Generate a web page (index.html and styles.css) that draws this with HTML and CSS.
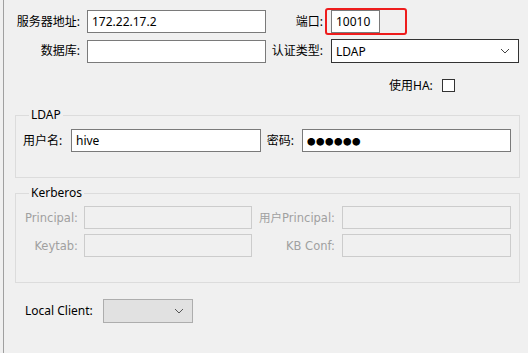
FILE: index.html
```html
<!DOCTYPE html>
<html lang="zh-CN">
<head>
    <meta charset="UTF-8">
    <title>连接设置</title>
    <link rel="stylesheet" href="styles.css">
</head>
<body>
    <div class="frame">

        <div class="row row-server">
            <label class="lbl lbl-main">服务器地址:</label>
            <input class="field field-host" type="text" value="172.22.17.2">
            <label class="lbl lbl-side">端口:</label>
            <span class="mark">
                <input class="field field-port" type="text" value="10010">
            </span>
        </div>

        <div class="row row-db">
            <label class="lbl lbl-main">数据库:</label>
            <input class="field field-host" type="text" value="">
            <label class="lbl lbl-side">认证类型:</label>
            <div class="combo combo-auth">
                <span>LDAP</span>
                <svg width="10" height="6" viewBox="0 0 10 6"><path d="M1 1 L5 5 L9 1" fill="none" stroke="#444" stroke-width="1"/></svg>
            </div>
        </div>

        <div class="row row-ha">
            <label class="lbl">使用HA:</label>
            <span class="check"></span>
        </div>

        <fieldset class="group group-ldap">
            <legend>LDAP</legend>
            <div class="grow">
                <label class="lbl lbl-user">用户名:</label>
                <input class="field field-user" type="text" value="hive">
                <label class="lbl lbl-pass">密码:</label>
                <input class="field field-pass" type="text" value="●●●●●●">
            </div>
        </fieldset>

        <fieldset class="group group-kb">
            <legend>Kerberos</legend>
            <div class="grow">
                <label class="lbl off lbl-k1">Principal:</label>
                <input class="field dis field-k1" type="text" disabled>
                <label class="lbl off lbl-k2">用户Principal:</label>
                <input class="field dis field-k2" type="text" disabled>
            </div>
            <div class="grow">
                <label class="lbl off lbl-k1">Keytab:</label>
                <input class="field dis field-k1" type="text" disabled>
                <label class="lbl off lbl-k2">KB Conf:</label>
                <input class="field dis field-k2" type="text" disabled>
            </div>
        </fieldset>

        <div class="row row-local">
            <label class="lbl lbl-local">Local Client:</label>
            <div class="combo combo-local">
                <svg width="10" height="6" viewBox="0 0 10 6"><path d="M1 1 L5 5 L9 1" fill="none" stroke="#555" stroke-width="1"/></svg>
            </div>
        </div>

    </div>
</body>
</html>
```
FILE: styles.css
```css
body {
    margin: 0;
    background: #f0f0f0;
    font-family: "Noto Sans", "Noto Sans CJK SC", sans-serif;
    font-size: 12px;
    color: #000;
}
.frame {
    margin-left: 3px;
    border-left: 1px solid #a0a0a0;
    height: 353px;
    box-sizing: border-box;
    overflow: hidden;
}
.row {
    display: flex;
    align-items: center;
}
.lbl {
    white-space: nowrap;
    line-height: 16px;
}
.lbl-main {
    width: 76px;
    margin-right: 7px;
    text-align: right;
}
.lbl-side {
    width: 57px;
    margin-right: 2px;
    text-align: right;
}
.field {
    box-sizing: border-box;
    height: 23px;
    margin: 0;
    padding: 0 4px;
    border: 1px solid #7a7a7a;
    background: #fff;
    font-family: "Noto Sans", "Noto Sans CJK SC", sans-serif;
    font-size: 12px;
    color: #000;
    outline: none;
}
.field-host {
    width: 179px;
}
.row-server {
    margin-top: 8px;
    height: 27px;
}
.mark {
    display: flex;
    align-items: center;
    box-sizing: border-box;
    width: 82px;
    height: 27px;
    border: 2px solid #ee1c1c;
    border-radius: 3px;
    padding-left: 4px;
}
.field-port {
    width: 49px;
}
.row-db {
    margin-top: 4px;
    height: 24px;
}
.combo {
    display: flex;
    align-items: center;
    justify-content: space-between;
    box-sizing: border-box;
    height: 24px;
    padding: 0 8px 0 4px;
}
.combo-auth {
    width: 188px;
    margin-left: 6px;
    border: 1px solid #333;
    background: #fff;
}
.row-ha {
    margin-top: 16px;
    height: 13px;
    padding-left: 385px;
}
.row-ha .lbl {
    margin-right: 9px;
}
.check {
    box-sizing: border-box;
    width: 13px;
    height: 13px;
    border: 1px solid #333;
    background: #fff;
}
.group {
    box-sizing: border-box;
    width: 505px;
    margin: 15px 0 0 11px;
    padding: 6px 8px 25px 7px;
    border: 1px solid #dcdcdc;
}
.group legend {
    margin-left: 6px;
    padding: 0 2px;
    line-height: 16px;
}
.grow {
    display: flex;
    align-items: center;
    height: 23px;
}
.grow + .grow {
    margin-top: 5px;
}
.lbl-user {
    width: 40px;
    margin-right: 8px;
}
.field-user {
    width: 190px;
}
.lbl-pass {
    width: 33px;
    margin-right: 8px;
    text-align: right;
}
.field-pass {
    width: 209px;
    font-size: 8.5px;
    letter-spacing: 0.5px;
}
.group-kb {
    margin-top: 7px;
    padding-top: 5px;
}
.off {
    color: #a0a0a0;
    font-family: "DejaVu Sans", sans-serif;
    font-size: 11.5px;
}
.lbl-k1 {
    width: 55px;
    margin-right: 6px;
    text-align: right;
}
.lbl-k2 {
    width: 83px;
    margin-right: 7px;
    text-align: right;
    font-family: "DejaVu Sans", "Noto Sans CJK SC", sans-serif;
}
.dis {
    border-color: #cccccc;
    background: #f0f0f0;
}
.field-k1 {
    width: 168px;
}
.field-k2 {
    width: 169px;
}
.row-local {
    margin-top: 16px;
    padding-left: 21px;
}
.lbl-local {
    width: 78px;
}
.combo-local {
    width: 90px;
    justify-content: flex-end;
    border: 1px solid #adadad;
    background: #e1e1e1;
}
```
